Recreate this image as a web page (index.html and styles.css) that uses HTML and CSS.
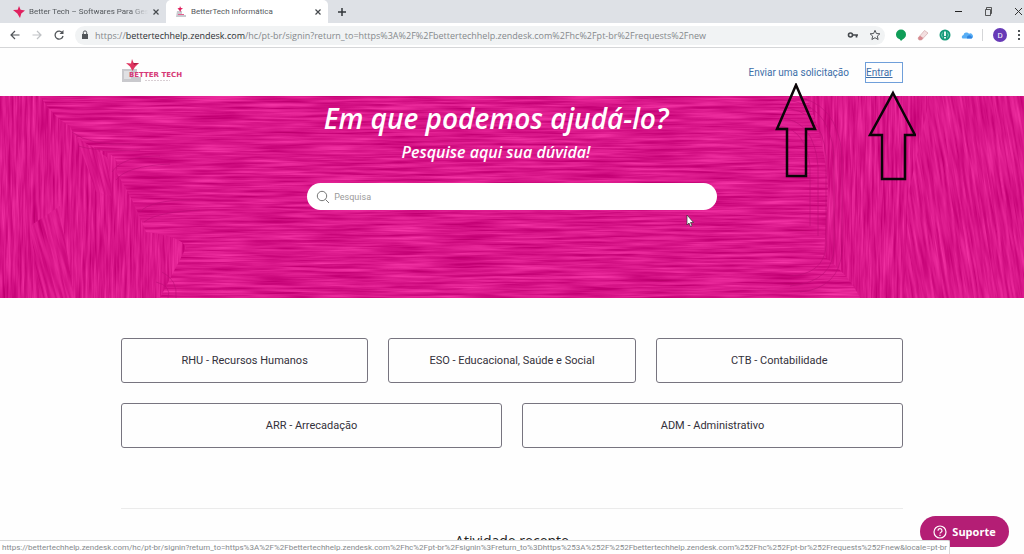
FILE: index.html
```html
<!DOCTYPE html>
<html lang="pt-BR">
<head>
    <meta charset="UTF-8">
    <meta name="viewport" content="width=device-width, initial-scale=1.0">
    <title>BetterTech Informática</title>
    <link rel="stylesheet" href="styles.css">
</head>
<body>
    <!-- Browser window -->
    <div class="tabs">
        <div class="tab">
            <svg class="favicon" width="12" height="12" viewBox="0 0 12 12"><path d="M6 0l1.600 3.800L12 4.500 8.300 7.400 7 12 4.300 7.600 0 4l4.700-.2z" fill="#e0215f"/></svg>
            <span class="tab-title faded">Better Tech – Softwares Para Ges</span>
            <button class="tab-close" aria-label="Fechar guia"><svg width="8" height="8" viewBox="0 0 8 8"><path d="M1.500 1.500l5 5M6.500 1.500l-5 5" stroke="#45494d" stroke-width="1.200"/></svg></button>
        </div>
        <div class="tab active">
            <svg class="favicon" width="12" height="12" viewBox="0 0 12 12"><path d="M2 5h5v4h4v2H1z" fill="#c9c9cf"/><path d="M5 0l1 2 2 .3-2 1.500L5.500 6 4 4 2.500 2.200l2-.2z" fill="#e0215f"/><path d="M3 8h6v1H3z" fill="#e5608f"/></svg>
            <span class="tab-title">BetterTech Informática</span>
            <button class="tab-close" aria-label="Fechar guia"><svg width="8" height="8" viewBox="0 0 8 8"><path d="M1.500 1.500l5 5M6.500 1.500l-5 5" stroke="#45494d" stroke-width="1.200"/></svg></button>
        </div>
        <button class="new-tab" aria-label="Nova guia"><svg width="10" height="10" viewBox="0 0 10 10"><path d="M5 1v8M1 5h8" stroke="#33373b" stroke-width="1.500"/></svg></button>
        <div class="window-buttons">
            <button aria-label="Minimizar"><svg width="9" height="9" viewBox="0 0 9 9"><path d="M1 4.500h7" stroke="#222"/></svg></button>
            <button aria-label="Restaurar"><svg width="9" height="9" viewBox="0 0 9 9"><path d="M1.500 2.500h5v6h-5zM2.500 2.500v-2h5v6h-1" fill="none" stroke="#333" stroke-width=".8"/></svg></button>
            <button aria-label="Fechar"><svg width="9" height="9" viewBox="0 0 9 9"><path d="M1 1l7 7M8 1L1 8" stroke="#333"/></svg></button>
        </div>
    </div>

    <div class="toolbar">
        <button aria-label="Voltar"><svg width="12" height="12" viewBox="0 0 12 12"><path d="M10.500 6h-8M6 2L2 6l4 4" fill="none" stroke="#505458" stroke-width="1.200"/></svg></button>
        <button aria-label="Avançar"><svg width="12" height="12" viewBox="0 0 12 12"><path d="M1.500 6h8M6 2l4 4-4 4" fill="none" stroke="#bfc2c5" stroke-width="1.200"/></svg></button>
        <button aria-label="Atualizar"><svg width="12" height="12" viewBox="0 0 12 12"><path d="M9.500 4A4 4 0 1 0 10 7" fill="none" stroke="#505458" stroke-width="1.300"/><path d="M10.500 1v4h-4z" fill="#505458"/></svg></button>
        <div class="address">
            <svg width="8" height="10" viewBox="0 0 8 10"><path d="M1 4h6v5H1z" fill="#505458"/><path d="M2.300 4V2.600a1.700 1.700 0 0 1 3.400 0V4" fill="none" stroke="#505458"/></svg>
            <span class="url">https://<b>bettertechhelp.zendesk.com</b>/hc/pt-br/signin?return_to=https%3A%2F%2Fbettertechhelp.zendesk.com%2Fhc%2Fpt-br%2Frequests%2Fnew</span>
            <button aria-label="Senhas"><svg width="12" height="12" viewBox="0 0 12 12"><circle cx="3.500" cy="6" r="2" fill="none" stroke="#45494d" stroke-width="1.600"/><path d="M5.500 6H11M9.500 6v2.500" stroke="#45494d" stroke-width="1.700"/></svg></button>
            <button aria-label="Favoritos"><svg width="12" height="12" viewBox="0 0 12 12"><path d="M6 1.300l1.400 3.200 3.500.3-2.600 2.300.8 3.400L6 8.700l-3.100 1.800.8-3.400L1.100 4.800l3.500-.3z" fill="none" stroke="#505458"/></svg></button>
        </div>
        <div class="extensions">
            <button aria-label="Hangouts"><svg width="12" height="12" viewBox="0 0 12 12"><circle cx="6" cy="5.500" r="5" fill="#109d58"/><path d="M4 9h5l-3 3z" fill="#109d58"/></svg></button>
            <button aria-label="Borracha"><svg width="12" height="12" viewBox="0 0 12 12"><path d="M1 9l6.500-7.500L11 4 4.500 11 2 11z" fill="#f3dfe0" stroke="#d3a9ab" stroke-width=".7"/><path d="M1 9l2-2.300L6.300 9 4.500 11H2z" fill="#d98b91"/></svg></button>
            <button aria-label="Extensão"><svg width="12" height="12" viewBox="0 0 12 12"><circle cx="6" cy="6" r="5.500" fill="#159a79"/><path d="M3.500 3.500a4 4 0 0 0 0 5M8.500 3.500a4 4 0 0 1 0 5" fill="none" stroke="#8fd3c0" stroke-width=".8"/><path d="M6 2.500V7M6 8v1.500" stroke="#fff" stroke-width="1.800"/></svg></button>
            <button aria-label="Nuvem"><svg width="12" height="12" viewBox="0 0 12 12"><path d="M1.500 9.500a2 2 0 0 1 1-3.500 3 3 0 0 1 5.500-1.200 2.400 2.400 0 0 1 2.500 4.700z" fill="#58aef5"/><path d="M6 9.500a2.500 2.500 0 0 1 4.500-2 1.200 1.200 0 0 1 0 2z" fill="#2f83e0"/></svg></button>
        </div>
        <button class="avatar" aria-label="Perfil">D</button>
        <button class="menu" aria-label="Menu"><svg width="4" height="12" viewBox="0 0 4 12"><path d="M1 1h2v2H1zM1 5h2v2H1zM1 9h2v2H1z" fill="#505458"/></svg></button>
    </div>

    <!-- Help center -->
    <div class="page">
        <header class="header container">
            <a class="logo" href="#" aria-label="Better Tech">
                <svg width="64" height="26" viewBox="0 0 64 26">
                    <path d="M1 10h15v4h-4v4h8v5H1z" fill="#c9c9cd"/>
                    <path d="M3 12h7v8H3z" fill="#e0e0e3"/>
                    <path d="M11 0l1.500 4 5.500 0-4 4-2.500 4-2.500-4.500L5 4l5 .5z" fill="#df3560"/>
                    <path d="M11 0l1.500 4 5.500 0-5 2z" fill="#a91d43"/>
                    <text class="logo-name" x="8" y="18">BETTER TECH</text>
                    <path d="M24 21.500h25" stroke="#d8ced3" stroke-dasharray="2 1"/>
                </svg>
            </a>
            <nav class="nav">
                <a href="#">Enviar uma solicitação</a>
                <a class="login" href="#">Entrar</a>
            </nav>

            <svg class="arrows" width="150" height="100" viewBox="0 0 150 100" fill="none" stroke="#0b0508" stroke-width="2.500">
                <path d="M30 2L49 46H40V93H21V46H11z"/>
                <path d="M127 10L149 52H139V96H116V52H104z"/>
            </svg>
        </header>

        <section class="hero">
            <svg class="hero-texture" viewBox="0 0 1024 202" preserveAspectRatio="xMidYMid slice" aria-hidden="true">
                <defs>
                    <filter id="brush-h" x="0" y="0" width="1" height="1" color-interpolation-filters="sRGB">
                        <feTurbulence type="fractalNoise" baseFrequency="0.016 0.36" numOctaves="3" seed="4"/>
                        <feColorMatrix values=".3 0 0 0 .7  .32 0 0 0 -.07  .3 0 0 0 .39  0 0 0 0 1"/>
                    </filter>
                    <filter id="brush-v" x="0" y="0" width="1" height="1" color-interpolation-filters="sRGB">
                        <feTurbulence type="fractalNoise" baseFrequency="0.36 0.022" numOctaves="3" seed="9"/>
                        <feColorMatrix values=".26 0 0 0 .72  .28 0 0 0 -.05  .26 0 0 0 .41  0 0 0 0 1"/>
                    </filter>
                    <clipPath id="left-slant"><path d="M76 40L108 62 112 100 96 96zM30 130L60 110 74 202H40z"/></clipPath>
                    <clipPath id="right-slant"><path d="M930 0L1024 0V202H904L908 100z"/></clipPath>
                    <clipPath id="middle"><path d="M40 0Q54 22 70 30Q74 44 100 54Q122 60 116 76Q134 104 146 136Q182 140 186 152L160 202H860Q850 180 824 160L828 90Q824 40 806 0z"/></clipPath>
                </defs>
                <rect width="1024" height="202" filter="url(#brush-v)"/>
                <g clip-path="url(#left-slant)"><rect x="-40" y="-20" width="260" height="260" filter="url(#brush-v)" transform="rotate(-14 80 100)"/></g>
                <g clip-path="url(#right-slant)"><rect x="860" y="-40" width="260" height="300" filter="url(#brush-v)" transform="rotate(-9 960 100)"/></g>
                <g clip-path="url(#middle)"><rect width="1024" height="202" filter="url(#brush-h)"/></g>
                <g fill="none" stroke="#bd0d76" stroke-opacity=".6">
                    <path d="M780 4Q830 4 834 60V150Q834 186 790 190M780 12Q822 12 826 60V150Q824 178 790 180M790 0Q838 4 842 60V154Q840 192 800 196M780 22Q814 24 818 70V140M780 30Q806 34 810 70V130"/>
                    <path d="M72 36Q90 50 130 48M78 50Q96 56 140 54M112 76Q122 60 160 60M116 84Q126 70 170 68M140 116Q150 104 190 104M144 126Q156 116 200 114M156 186Q172 190 168 202M162 176Q178 184 176 202"/>
                </g>
            </svg>
            <div class="hero-inner">
                <div class="hero-text">
                    <h1>Em que podemos ajudá-lo?</h1>
                    <h2>Pesquise aqui sua dúvida!</h2>
                </div>
                <form class="search">
                    <svg width="14" height="14" viewBox="0 0 14 14" fill="none" stroke="#777"><circle cx="6" cy="6" r="4.700"/><path d="M9.500 9.500l3.500 3.500"/></svg>
                    <input type="search" placeholder="Pesquisa" aria-label="Pesquisa">
                </form>
            </div>
            <svg class="cursor" width="8" height="13" viewBox="0 0 8 13"><path d="M1 1v10l2-2 1.500 3.500 1.500-.7L4.500 8.500h3z" fill="#fff" stroke="#333" stroke-width=".7"/></svg>
        </section>

        <main class="container">
            <div class="blocks">
                <a class="block" href="#">RHU - Recursos Humanos</a>
                <a class="block" href="#">ESO - Educacional, Saúde e Social</a>
                <a class="block" href="#">CTB - Contabilidade</a>
                <a class="block wide" href="#">ARR - Arrecadação</a>
                <a class="block wide" href="#">ADM - Administrativo</a>
            </div>
            <section class="activity">
                <h2>Atividade recente</h2>
            </section>
        </main>
    </div>

    <button class="support">
        <svg width="14" height="14" viewBox="0 0 14 14" fill="none" stroke="#fff" stroke-width="1.200"><circle cx="7" cy="7" r="6"/><path d="M5 5.700a2 2 0 1 1 2.800 1.800Q7 7.900 7 8.600M7 9.700V11"/></svg>
        Suporte
    </button>
    <div class="status">https://bettertechhelp.zendesk.com/hc/pt-br/signin?return_to=https%3A%2F%2Fbettertechhelp.zendesk.com%2Fhc%2Fpt-br%2Fsignin%3Freturn_to%3Dhttps%253A%252F%252Fbettertechhelp.zendesk.com%252Fhc%252Fpt-br%252Frequests%252Fnew&amp;locale=pt-br</div>
</body>
</html>
```
FILE: styles.css
```css
* {
    box-sizing: border-box;
}

body {
    margin: 0;
    height: 100vh;
    overflow: hidden;
    display: flex;
    flex-direction: column;
    font-family: Roboto, "Noto Sans", sans-serif;
    font-size: 10px;
    color: #33303a;
    background: #fefefe;
}

button {
    display: flex;
    align-items: center;
    justify-content: center;
    padding: 0;
    border: none;
    background: none;
    font-family: inherit;
    cursor: pointer;
}

a {
    color: inherit;
    text-decoration: none;
}

svg {
    flex: none;
}

/* Browser window */
.tabs {
    display: flex;
    align-items: center;
    flex: none;
    height: 23px;
    background: #dee1e6;
}

.tab {
    display: flex;
    align-items: center;
    gap: 4px;
    width: 166px;
    height: 23px;
    padding: 0 6px 0 13px;
    font-size: 8px;
    color: #54585c;
}

.tab.active {
    width: 162px;
    padding-left: 9px;
    background: #fff;
    border-radius: 5px 5px 0 0;
}

.tab-title {
    flex: 1;
    overflow: hidden;
    white-space: nowrap;
}

.faded {
    -webkit-mask-image: linear-gradient(to right, #000 85%, transparent);
    mask-image: linear-gradient(to right, #000 85%, transparent);
}

.new-tab {
    width: 28px;
}

.window-buttons {
    display: flex;
    gap: 21px;
    margin-left: auto;
    padding-right: 1px;
}

.toolbar {
    display: flex;
    align-items: center;
    flex: none;
    gap: 10px;
    height: 25px;
    padding: 0 3px 0 9px;
    background: #fff;
    border-bottom: 1px solid #d5d6d8;
}

.address {
    display: flex;
    align-items: center;
    gap: 10px;
    flex: 1;
    min-width: 0;
    height: 19px;
    padding: 0 4px 0 6px;
    border-radius: 10px;
    background: #f1f3f4;
}

.address > svg {
    margin-right: -4px;
}

.url {
    flex: 1;
    overflow: hidden;
    white-space: nowrap;
    font-family: "Open Sans", "Noto Sans", sans-serif;
    font-size: 9px;
    color: #85898c;
}

.url b {
    font-weight: 400;
    color: #2d3033;
}

.extensions {
    display: flex;
    gap: 10px;
    padding-right: 9px;
    border-right: 1px solid #d5d6d8;
}

.avatar {
    width: 14px;
    height: 14px;
    border-radius: 50%;
    background: #673ab7;
    color: #fff;
    font-size: 8px;
}

/* Help center */
.container {
    width: 100%;
    max-width: 782px;
    margin: 0 auto;
}

.header {
    position: relative;
    display: flex;
    align-items: center;
    justify-content: space-between;
    height: 48px;
}

.logo {
    display: flex;
}

.logo-name {
    font: bold 7px "DejaVu Sans", sans-serif;
    fill: #d63a76;
}

.nav {
    display: flex;
    align-items: center;
    gap: 16px;
    color: #3c6ea8;
}

.login {
    width: 38px;
    padding: 4px 0;
    border: 1px solid #6f9fda;
    text-decoration: underline;
}

.arrows {
    position: absolute;
    top: 35px;
    right: -13px;
    z-index: 2;
}

.hero {
    position: relative;
    height: 202px;
    background: #d9178b;
}

.hero-texture {
    position: absolute;
    inset: 0;
    width: 100%;
    height: 100%;
}

.hero-inner {
    position: relative;
    display: flex;
    flex-direction: column;
    align-items: center;
    color: #fff;
}

.hero-text {
    padding-right: 32px;
    font-family: "Open Sans", "Noto Sans", sans-serif;
    font-style: italic;
    text-align: center;
}

.hero h1 {
    margin: 4px 0 0;
    font-size: 28px;
    line-height: 36px;
    font-weight: 600;
}

.hero h2 {
    margin: 6px 0 0;
    font-size: 16px;
    line-height: 20px;
    font-weight: 600;
}

.search {
    display: flex;
    align-items: center;
    gap: 2px;
    width: 40%;
    height: 27px;
    margin-top: 21px;
    padding: 0 9px;
    border-radius: 14px;
    background: #fff;
}

.search input {
    flex: 1;
    min-width: 0;
    padding: 1px 2px;
    border: none;
    outline: none;
    background: none;
    font-family: inherit;
    font-size: 9px;
}

.search input::placeholder {
    color: #9a9a9a;
}

.cursor {
    position: absolute;
    top: 118px;
    left: 67%;
}

.blocks {
    display: grid;
    grid-template-columns: repeat(6, 1fr);
    gap: 20px;
    padding: 40px 0 60px;
    border-bottom: 1px solid #ebebeb;
}

.block {
    grid-column: span 2;
    padding: 14px 10px;
    border: 1px solid #77747f;
    border-radius: 3px;
    font-size: 11px;
    line-height: 15px;
    text-align: center;
}

.block.wide {
    grid-column: span 3;
}

.activity h2 {
    margin: 20px 0;
    font-family: "Open Sans", "Noto Sans", sans-serif;
    font-size: 14px;
    line-height: 24px;
    font-weight: 400;
    text-align: center;
    color: #222;
}

.support {
    position: fixed;
    right: 15px;
    bottom: 7px;
    gap: 5px;
    width: 89px;
    height: 31px;
    border-radius: 16px;
    background: #b41e75;
    color: #fff;
    font-family: "Open Sans", "Noto Sans", sans-serif;
    font-size: 11px;
    font-weight: 700;
}

.status {
    position: fixed;
    left: 0;
    bottom: 0;
    height: 14px;
    padding: 0 2px;
    border-top: 1px solid #d8d8d8;
    border-right: 1px solid #d8d8d8;
    border-radius: 0 2px 0 0;
    background: #fff;
    font-size: 8px;
    line-height: 13px;
    white-space: nowrap;
    color: #85898c;
}
```
